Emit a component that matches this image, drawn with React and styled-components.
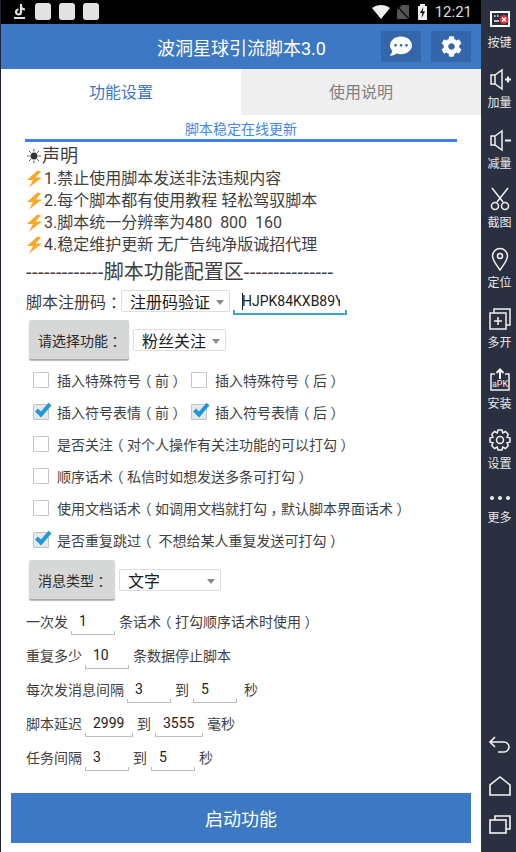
import React from "react";
import styled, { createGlobalStyle } from "styled-components";
import { FaCog, FaCommentDots } from "react-icons/fa";

const Global = createGlobalStyle`
  html, body { margin: 0; padding: 0; background: #fff; }
  * { box-sizing: border-box; }
  body { font-family: Roboto, "Noto Sans CJK SC", sans-serif; }
`;

const Screen = styled.div`display:flex;width:516px;height:852px;overflow:hidden;`;
const Main = styled.div`width:481px;height:852px;display:flex;flex-direction:column;border-left:1px solid #1d2533;background:#fff;`;

const StatusBar = styled.div`height:24px;background:#000;display:flex;align-items:center;padding:0 9px 0 11px;flex:none;`;
const Notif = styled.span`width:16px;height:17px;background:#e2e2e2;border-radius:3px;margin-left:8px;flex:none;margin-top:-1px;`;
const StatusRight = styled.div`margin-left:auto;display:flex;align-items:center;color:#ddd;font-size:15px;`;
const Time = styled.span`margin-left:8px;`;

const Header = styled.div`height:45px;background:#3c78c3;display:flex;align-items:center;padding:0 10px 0 156px;flex:none;`;
const Title = styled.div`color:#fff;font-size:18px;flex:1;`;
const HeadBtn = styled.div`width:40px;height:31px;background:#3566a9;color:#fff;display:flex;align-items:center;justify-content:center;margin-left:10px;font-size:${p => p.$size}px;margin-top:-1px;`;

const Tabs = styled.div`height:46px;display:flex;flex:none;`;
const Tab = styled.div`flex:1;display:flex;align-items:center;justify-content:center;font-size:16px;padding-bottom:2px;
  color:${p => p.$active ? "#3c78c3" : "#808080"};background:${p => p.$active ? "#fff" : "#efefef"};`;

const Body = styled.div`flex:1;display:flex;flex-direction:column;padding-left:24px;position:relative;`;
const Notice = styled.div`width:432px;text-align:center;color:#4587ec;font-size:14px;line-height:28px;border-bottom:3px solid #3f80ee;height:27px;`;
const Lines = styled.div`margin:2px 0 0 1px;color:#3f3f3f;`;
const Head = styled.div`font-size:18px;height:24px;line-height:24px;display:flex;align-items:center;`;
const Line = styled.div`font-size:16px;height:22px;line-height:22px;display:flex;align-items:center;`;
const Divider = styled.div`font-size:20px;height:26px;line-height:26px;color:#3f3f3f;white-space:nowrap;margin:3px 0 0 1px;display:flex;align-items:center;`;
const Dash = styled.span`letter-spacing:.45px;`;

const RegRow = styled.div`display:flex;align-items:center;height:24px;margin-top:4px;padding-left:1px;font-size:16px;color:#3f3f3f;`;
const Spinner = styled.div`display:flex;align-items:center;height:22px;width:${p => p.$w}px;border:1px solid #ddd;border-radius:2px;padding-left:8px;font-size:16px;color:#1c1c1c;position:relative;background:#fff;flex:none;
  &::after{content:"";position:absolute;right:5px;top:9px;border:4px solid transparent;border-top:5px solid #8a8a8a;}`;
const RegLabel = styled.span`width:95px;flex:none;white-space:nowrap;`;
const RegInput = styled.div`width:114px;height:26px;margin-left:3px;margin-top:2px;font-size:14px;line-height:24px;color:#222;overflow:hidden;white-space:nowrap;padding-left:9px;position:relative;flex:none;
  border-bottom:2px solid #3aa8d4;
  &::before{content:"";position:absolute;left:9px;top:4px;width:1px;height:17px;background:#222;}
  &::after{content:"";position:absolute;left:0;bottom:0;right:0;height:3px;border-left:2px solid #3aa8d4;border-right:2px solid #3aa8d4;}`;
const Clip = styled.span`display:block;width:98px;overflow:hidden;`;

const ActionRow = styled.div`display:flex;align-items:center;margin-left:4px;margin-top:${p => p.$mt}px;`;
const GrayBtn = styled.div`width:${p => p.$w}px;height:40px;background:#d6d7d7;border-bottom:1px solid #a9a9a9;border-radius:2px;box-shadow:0 1px 1px #bbb;display:flex;align-items:center;padding-left:9px;font-size:14px;color:#2b2b2b;flex:none;margin-right:4px;white-space:nowrap;`;

const Checks = styled.div`margin-top:4px;margin-left:8px;`;
const CheckRow = styled.div`display:flex;align-items:center;height:32px;font-size:14px;color:#3f3f3f;white-space:nowrap;`;
const CheckItem = styled.div`display:flex;align-items:center;width:${p => p.$w ? p.$w + "px" : "auto"};flex:none;`;
const Box = styled.span`width:16px;height:16px;border:1px solid #c4c4c4;border-radius:1px;background:${p => p.$on ? "#e8e8e8" : "#fff"};margin-right:8px;flex:none;position:relative;`;
const Tick = styled.svg`position:absolute;left:0;top:-4px;width:18px;height:18px;`;

const Fields = styled.div`margin-top:4px;padding-left:1px;`;
const FieldRow = styled.div`display:flex;align-items:center;height:34px;font-size:14px;color:#3f3f3f;white-space:nowrap;`;
const Edit = styled.div`width:${p => p.$w}px;height:26px;margin:5px 4px 0 ${p => p.$ml ?? 3}px;padding-left:8px;padding-bottom:4px;font-size:14px;line-height:20px;color:#222;flex:none;position:relative;
  &::after{content:"";position:absolute;left:0;right:0;bottom:2px;height:3px;border:1px solid #bdbdbd;border-top:0;}`;
const Sec = styled.span`margin-left:3px;`;

const Start = styled.div`position:absolute;left:10px;top:678px;width:460px;height:50px;background:#3c78c3;color:#fff;font-size:18px;display:flex;align-items:center;justify-content:center;`;

const Side = styled.div`width:35px;height:852px;background:#2a3040;color:#e8e8e8;display:flex;flex-direction:column;align-items:center;flex:none;padding-left:2px;`;
const NavItem = styled.div`height:${p => p.$h}px;width:100%;display:flex;flex-direction:column;align-items:center;font-size:12px;line-height:14px;flex:none;padding-top:${p => p.$pt}px;white-space:nowrap;`;
const NavIcon = styled.svg`width:24px;height:24px;flex:none;margin-bottom:5px;fill:none;stroke:#f0f0f0;stroke-width:1.5;`;
const MoreDots = styled.svg`width:24px;height:8px;flex:none;margin:11px 0 9px;`;
const Spacer = styled.div`flex:1;`;
const SysIcon = styled.svg`width:24px;height:24px;margin-bottom:${p => p.$mb}px;fill:none;stroke:#f4f4f4;stroke-width:1.6;flex:none;`;

/* half-width alternates, padded back to a full cell so the mark sits centred */
const Pun = styled.span`font-feature-settings:"halt";padding:0 .25em;`;
const Zh = ({ children }) => (
  <span>
    {children.split(/([（）：，])/).map((part, i) =>
      /^[（）：，]$/.test(part) ? <Pun key={i}>{part}</Pun> : part
    )}
  </span>
);

const BoltIcon = styled.svg`flex:none;width:18px;height:18px;`;
const Bolt = () => (
  <BoltIcon viewBox="0 0 18 18">
    <path d="M11.5 0.5 L1 10 L7 10 L3 17.5 L16 7.5 L9.5 7.5 L15 1.5 Z" fill="#f9a825" />
  </BoltIcon>
);
const SunIcon = styled.svg`flex:none;width:16px;height:16px;`;
const Sun = () => (
  <SunIcon viewBox="0 0 16 16">
    <circle cx="8" cy="8" r="3.5" fill="#333" />
    <path d="M8 1v2.5M8 12.5V15M1 8h2.5M12.5 8H15M3 3l1.800 1.800M11.200 11.200L13 13M13 3l-1.800 1.800M4.800 11.200L3 13" stroke="#555" strokeWidth="1" />
  </SunIcon>
);

const Check = ({ on, w, children }) => (
  <CheckItem $w={w}>
    <Box $on={on}>
      {on && (
        <Tick viewBox="0 0 18 18">
          <path d="M2.500 9 L7 13.500 L16 3" fill="none" stroke="#1e98d8" strokeWidth="4" />
        </Tick>
      )}
    </Box>
    <Zh>{children}</Zh>
  </CheckItem>
);

const nav = [
  ["按键", 60, <g key="a"><rect x="3" y="5" width="18" height="14" stroke="#fff" strokeWidth="2" /><path d="M6 9h1.500M9 9h1.500M6 14h5" strokeWidth="1.500" /><circle cx="16" cy="12.500" r="4.500" fill="#e53038" stroke="none" /><path d="M14 10.500l4 4M18 10.500l-4 4" stroke="#fff" strokeWidth="1.400" /></g>],
  ["加量", 61, <g key="b"><path d="M3 8h4l7-5v19l-7-5H3zM7 8v9" /><path d="M17 12.500h6M20 9.500v6" strokeWidth="2" /></g>],
  ["减量", 59, <g key="c"><path d="M3 8h4l7-5v19l-7-5H3zM7 8v9" /><path d="M17 12.500h6" strokeWidth="2" /></g>],
  ["截图", 60, <g key="d"><path d="M4 1l11 14M20 1L9 15" /><circle cx="7" cy="19" r="3.500" /><circle cx="17" cy="19" r="3.500" /></g>],
  ["定位", 60, <g key="e"><path d="M12 23C7 16 4.500 13 4.500 9a7.500 7.500 0 0 1 15 0c0 4-2.500 7-7.500 14z" /><circle cx="12" cy="9" r="2.500" /></g>],
  ["多开", 61, <g key="f"><path d="M6 6V2h16v16h-4" /><rect x="2" y="6" width="16" height="16" /><path d="M10 10v8M6 14h8" /></g>],
  ["安装", 60, <g key="g"><path d="M7 6H3v16h18V6h-4" /><path d="M12 11V2M8.500 5L12 1.500 15.500 5" strokeWidth="2" /><text x="12" y="19" textAnchor="middle" fontSize="9" fill="#f0f0f0" stroke="none" fontFamily="Roboto">aPK</text></g>],
  ["设置", 58, <g key="h"><circle cx="12" cy="12" r="3.500" /><path d="M10 2h4l.8 3 2.700-1.500 2.800 2.800L19 9l3 1v4l-3 1 1.300 2.700-2.800 2.800L14.800 19 14 22h-4l-.8-3-2.700 1.500-2.800-2.800L5 15l-3-1v-4l3-1-1.300-2.700 2.800-2.800L9.200 5z" /></g>],
];

export default function App() {
  return (
    <Screen>
      <Global />
      <Main>
        <StatusBar>
          <svg width="15" height="16" viewBox="0 0 15 16">
            <path d="M9 0v8a2.500 2.500 0 1 1-2.500-2.500M9 3c1 1.500 2.500 2.500 4 2.500M2 14h11" fill="none" stroke="#e2e2e2" strokeWidth="2.200" />
          </svg>
          <Notif /><Notif /><Notif />
          <StatusRight>
            <svg width="18" height="14" viewBox="0 0 18 14"><path d="M0 3C5-1 13-1 18 3L9 14z" fill="#eee" /></svg>
            <svg width="12" height="14" viewBox="0 0 12 14" style={{ marginLeft: 7 }}><path d="M0 14V5l5-5h7v14z" fill="#555" /><path d="M0 1l12 13" stroke="#111" strokeWidth="1.500" /></svg>
            <svg width="9" height="16" viewBox="0 0 9 16" style={{ marginLeft: 9 }}><path d="M2 2V0h5v2h2v14H0V2z" fill="#eee" /><path d="M5.500 3L2 9h2.500L3.500 14 7 7.500H4.500z" fill="#000" /></svg>
            <Time>12:21</Time>
          </StatusRight>
        </StatusBar>
        <Header>
          <Title>波洞星球引流脚本3.0</Title>
          <HeadBtn $size={22}><FaCommentDots /></HeadBtn>
          <HeadBtn $size={21}><FaCog /></HeadBtn>
        </Header>
        <Tabs>
          <Tab $active>功能设置</Tab>
          <Tab>使用说明</Tab>
        </Tabs>
        <Body>
          <Notice>脚本稳定在线更新</Notice>
          <Lines>
            <Head><Sun />声明</Head>
            <Line><Bolt />1.禁止使用脚本发送非法违规内容</Line>
            <Line><Bolt />2.每个脚本都有使用教程 轻松驾驭脚本</Line>
            <Line><Bolt />3.脚本统一分辨率为480&nbsp;&nbsp;800&nbsp;&nbsp;160</Line>
            <Line><Bolt />4.稳定维护更新 无广告纯净版诚招代理</Line>
          </Lines>
          <Divider><Dash>-------------</Dash>脚本功能配置区<Dash>---------------</Dash></Divider>
          <RegRow>
            <RegLabel><Zh>脚本注册码：</Zh></RegLabel>
            <Spinner $w={109}>注册码验证</Spinner>
            <RegInput><Clip>HJPK84KXB89Y</Clip></RegInput>
          </RegRow>
          <ActionRow $mt={7}>
            <GrayBtn $w={100}><Zh>请选择功能：</Zh></GrayBtn>
            <Spinner $w={93}>粉丝关注</Spinner>
          </ActionRow>
          <Checks>
            <CheckRow><Check w={158}>插入特殊符号（前）</Check><Check>插入特殊符号（后）</Check></CheckRow>
            <CheckRow><Check on w={158}>插入符号表情（前）</Check><Check on>插入符号表情（后）</Check></CheckRow>
            <CheckRow><Check>是否关注（对个人操作有关注功能的可以打勾）</Check></CheckRow>
            <CheckRow><Check>顺序话术（私信时如想发送多条可打勾）</Check></CheckRow>
            <CheckRow><Check>使用文档话术（如调用文档就打勾，默认脚本界面话术）</Check></CheckRow>
            <CheckRow><Check on>是否重复跳过（ 不想给某人重复发送可打勾）</Check></CheckRow>
          </Checks>
          <ActionRow $mt={4}>
            <GrayBtn $w={86}><Zh>消息类型：</Zh></GrayBtn>
            <Spinner $w={102}>文字</Spinner>
          </ActionRow>
          <Fields>
            <FieldRow>一次发<Edit $w={44}>1</Edit><Zh>条话术（打勾顺序话术时使用）</Zh></FieldRow>
            <FieldRow>重复多少<Edit $w={44}>10</Edit>条数据停止脚本</FieldRow>
            <FieldRow>每次发消息间隔<Edit $w={44}>3</Edit>到<Edit $w={44} $ml={4}>5</Edit><Sec>秒</Sec></FieldRow>
            <FieldRow>脚本延迟<Edit $w={48}>2999</Edit>到<Edit $w={48} $ml={4}>3555</Edit>毫秒</FieldRow>
            <FieldRow>任务间隔<Edit $w={44}>3</Edit>到<Edit $w={44} $ml={4}>5</Edit>秒</FieldRow>
          </Fields>
          <Start>启动功能</Start>
        </Body>
      </Main>
      <Side>
        {nav.map(([label, h, icon]) => (
          <NavItem key={label} $h={h} $pt={7}>
            <NavIcon viewBox="0 0 24 24">{icon}</NavIcon>
            {label}
          </NavItem>
        ))}
        <NavItem $h={50} $pt={4}>
          <MoreDots viewBox="0 0 24 8"><circle cx="4" cy="4" r="2" fill="#eee" /><circle cx="12" cy="4" r="2" fill="#eee" /><circle cx="20" cy="4" r="2" fill="#eee" /></MoreDots>
          更多
        </NavItem>
        <Spacer />
        <SysIcon viewBox="0 0 24 24" $mb={17}><path d="M7 4L2 9l5 5M2 9h14a5 5 0 0 1 0 10H10" /></SysIcon>
        <SysIcon viewBox="0 0 24 24" $mb={14}><path d="M2 21V11L12 3l10 8v10z" /></SysIcon>
        <SysIcon viewBox="0 0 24 24" $mb={16}><rect x="2" y="8" width="16" height="13" /><path d="M7 8V4h15v13h-4" /></SysIcon>
      </Side>
    </Screen>
  );
}
